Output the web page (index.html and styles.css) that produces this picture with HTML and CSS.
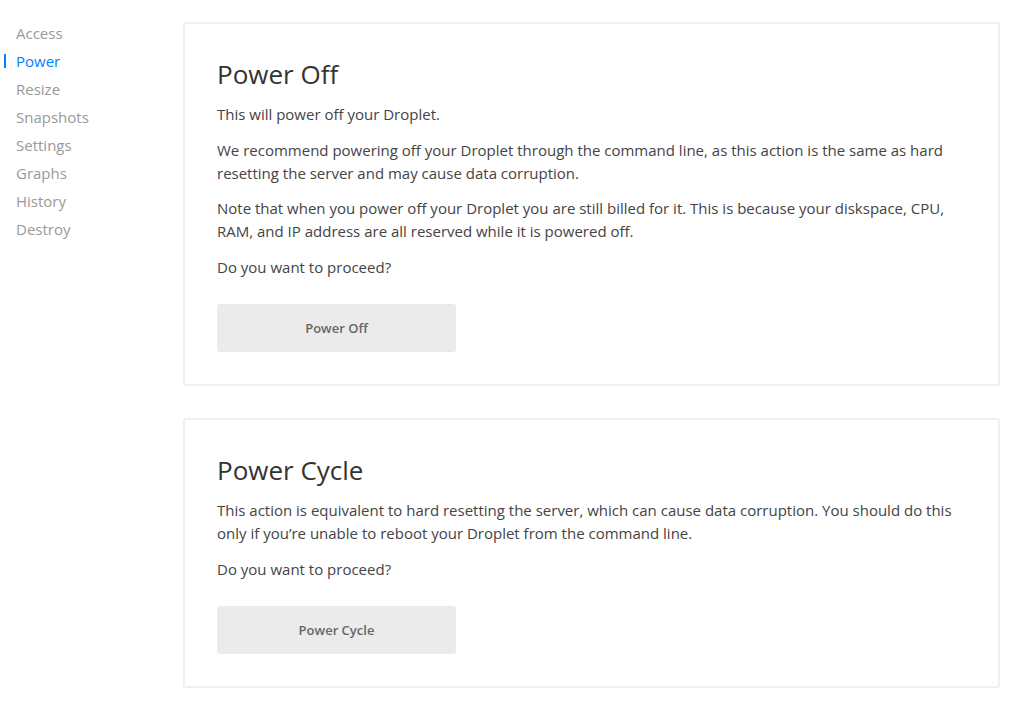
FILE: index.html
```html
<!DOCTYPE html>
<html>
<head>
<meta charset="utf-8">
<link rel="stylesheet" href="styles.css">
</head>
<body>
<div class="layout">
  <nav class="sidebar">
    <a class="nav-item">Access</a>
    <a class="nav-item active">Power</a>
    <a class="nav-item">Resize</a>
    <a class="nav-item">Snapshots</a>
    <a class="nav-item">Settings</a>
    <a class="nav-item">Graphs</a>
    <a class="nav-item">History</a>
    <a class="nav-item">Destroy</a>
  </nav>
  <main class="content">
    <section class="card">
      <h2 class="card-title">Power Off</h2>
      <p>This will power off your Droplet.</p>
      <p>We recommend powering off your Droplet through the command line, as this action is the same as hard resetting the server and may cause data corruption.</p>
      <p>Note that when you power off your Droplet you are still billed for it. This is because your diskspace, CPU, RAM, and IP address are all reserved while it is powered off.</p>
      <p>Do you want to proceed?</p>
      <button class="btn">Power Off</button>
    </section>
    <section class="card">
      <h2 class="card-title">Power Cycle</h2>
      <p>This action is equivalent to hard resetting the server, which can cause data corruption. You should do this only if you’re unable to reboot your Droplet from the command line.</p>
      <p>Do you want to proceed?</p>
      <button class="btn">Power Cycle</button>
    </section>
  </main>
</div>
</body>
</html>
```
FILE: styles.css
```css
html, body {
  margin: 0;
  padding: 0;
  background: #fff;
}
body {
  font-family: "Open Sans", "Liberation Sans", sans-serif;
  color: #444;
}
.layout {
  display: flex;
  align-items: flex-start;
}
.sidebar {
  width: 183px;
  flex: none;
  display: flex;
  flex-direction: column;
  padding-top: 19px;
}
.nav-item {
  position: relative;
  display: block;
  padding-left: 16px;
  font-size: 15px;
  line-height: 28px;
  color: #999;
}
.nav-item.active {
  color: #0080ff;
}
.nav-item.active::before {
  content: "";
  position: absolute;
  left: 4px;
  top: 7px;
  width: 2px;
  height: 14px;
  background: #0080ff;
}
.content {
  width: 817px;
  padding-top: 22px;
  display: flex;
  flex-direction: column;
  gap: 32px;
}
.card {
  border: 2px solid #f0f0f0;
  border-radius: 3px;
  padding: 34px 32px 32px;
}
.card-title {
  margin: 0 0 13px;
  font-size: 26px;
  line-height: 32px;
  font-weight: 400;
  color: #333;
}
.card p {
  margin: 0 0 12.5px;
  font-size: 15px;
  line-height: 23px;
}
.btn {
  display: block;
  margin-top: 25.5px;
  width: 239px;
  height: 48px;
  border: 0;
  border-radius: 3px;
  background: #ebebeb;
  color: #666;
  font-family: inherit;
  font-size: 13px;
  font-weight: 600;
}
```
